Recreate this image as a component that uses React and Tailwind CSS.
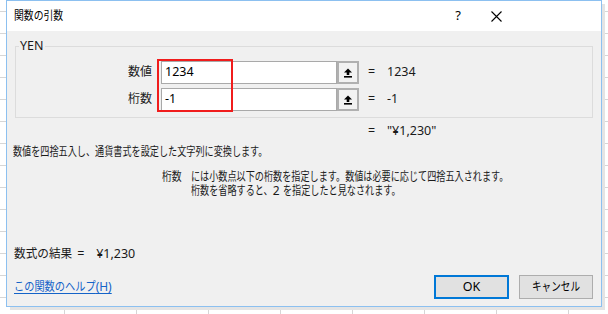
import React from "react";

// Condensed Japanese run (the dialog font is narrow); the negative margin
// compensates the layout width for the horizontal scale.
const J = ({ children, className = "", size = 12, s = 0.76 }) => {
  const n = Array.from(String(children)).length;
  return (
    <span
      className={"inline-block origin-left whitespace-nowrap " + className}
      style={{ fontSize: size, transform: `scaleX(${s})`, marginRight: -(n * size * (1 - s)) }}
    >
      {children}
    </span>
  );
};

function UpIcon() {
  return (
    <svg width="10" height="10" viewBox="0 0 10 10">
      <path d="M5 0.5 L9 4.5 L6.3 4.5 L6.3 7 L3.7 7 L3.7 4.5 L1 4.5 Z" fill="#000" />
      <rect x="1" y="8" width="8" height="1.6" fill="#000" />
    </svg>
  );
}

function ArgRow({ label, value, result }) {
  return (
    <div className="flex items-center h-[23px]">
      <div className="w-[136px] flex justify-end">
        <J size={12.5} s={0.96}>{label}</J>
      </div>
      <div className="ml-[9px] flex h-[23px]">
        <div className="w-[176px] h-full border border-[#a9a9a9] bg-white flex items-center pl-[3px] text-[12.5px] text-black">
          {value}
        </div>
        <div className="w-[22px] h-full border-2 border-[#b0b0b0] bg-[#f2f2f2] flex items-center justify-center">
          <UpIcon />
        </div>
      </div>
      <div className="ml-[9px] w-[19px] text-[12.5px]">=</div>
      <div className="text-[12.5px]">{result}</div>
    </div>
  );
}

export default function App() {
  return (
    <div
      className="relative w-[608px] h-[314px] overflow-hidden bg-white [background-image:repeating-linear-gradient(to_right,transparent_0_64px,#d6d6d6_64px_65px,transparent_65px_72px),repeating-linear-gradient(to_bottom,transparent_0_11px,#d6d6d6_11px_12px,transparent_12px_22px)]"
      style={{ fontFamily: '"Noto Sans", "Noto Sans CJK JP", sans-serif' }}
    >
      <div className="absolute left-[601px] top-[4px] w-[4px] h-[306px] bg-[#e4e4e4]" />
      <div className="absolute left-[10px] top-[307px] w-[595px] h-[3px] bg-[#e4e4e4]" />
      <div className="absolute left-[6px] top-0 w-[596px] h-[307px] border border-[#8cc0f0] bg-[#f0f0f0] text-[#1a1a1a] flex flex-col">
        {/* title bar */}
        <div className="h-[30px] bg-white flex items-center pl-[7px] shrink-0">
          <J className="text-black" s={0.82}>関数の引数</J>
          <div className="ml-auto flex items-center">
            <div className="w-[20px] text-center text-[13px] text-black mr-[23px]">?</div>
            <svg width="11" height="11" viewBox="0 0 11 11" className="mr-[99px]">
              <path d="M0.5 0.5 L10.5 10.5 M10.5 0.5 L0.5 10.5" stroke="#000" strokeWidth="1.1" />
            </svg>
          </div>
        </div>

        {/* body */}
        <div className="flex-1 px-[8px] flex flex-col">
          {/* group box */}
          <div className="relative mt-[15px] h-[72px] border border-[#dcdcdc] flex flex-col pt-[14px] gap-[4px]">
            <div className="absolute left-[3px] top-[-9px] bg-[#f0f0f0] px-[1px] text-[12.5px] leading-[16px]">YEN</div>
            <ArgRow label="数値" value="1234" result="1234" />
            <ArgRow label="桁数" value="-1" result="-1" />
            <div className="absolute left-[141px] top-[12px] w-[76px] h-[53px] border-2 border-[#f01c1c]" />
          </div>

          <div className="mt-[5px] h-[16px] flex items-center pl-[353px] text-[12.5px]">
            <span className="w-[19px]">=</span>
            <span>"¥1,230"</span>
          </div>

          <div className="mt-[5px] h-[16px] flex items-center -ml-[2px]">
            <J>数値を四捨五入し、通貨書式を設定した文字列に変換します。</J>
          </div>

          <div className="mt-[8px] flex pl-[147px]">
            <div className="w-[29px] leading-[14px]">
              <J s={0.82}>桁数</J>
            </div>
            <div className="flex flex-col leading-[14px]">
              <div>
                <J>には小数点以下の桁数を指定します。数値は必要に応じて四捨五入されます。</J>
              </div>
              <div className="flex items-baseline">
                <J>桁数を省略すると、</J>
                <span className="text-[12px] whitespace-pre">2 </span>
                <J>を指定したと見なされます。</J>
              </div>
            </div>
          </div>

          <div className="mt-[48px] h-[16px] flex items-center -ml-[1px] text-[12.5px]">
            <J size={12.5} s={0.93}>数式の結果</J>
            <span className="ml-[5px] w-[19px]">=</span>
            <span>¥1,230</span>
          </div>

          <div className="mt-[13px] h-[24px] flex items-center">
            <a className="-ml-[1px] text-[#1463c8] underline underline-offset-2 cursor-pointer flex items-baseline">
              <J className="underline underline-offset-2" s={0.85}>この関数のヘルプ</J>
              <span className="text-[12px]">(H)</span>
            </a>
            <div className="ml-auto flex gap-[10px]">
              <button className="w-[75px] h-[24px] border-2 border-[#0078d7] bg-[#e1e1e1] text-[12.5px] text-black flex items-center justify-center">
                OK
              </button>
              <button className="w-[74px] h-[24px] border border-[#adadad] bg-[#e1e1e1] text-black flex items-center justify-center">
                <J s={0.8}>キャンセル</J>
              </button>
            </div>
          </div>
        </div>
      </div>
    </div>
  );
}
